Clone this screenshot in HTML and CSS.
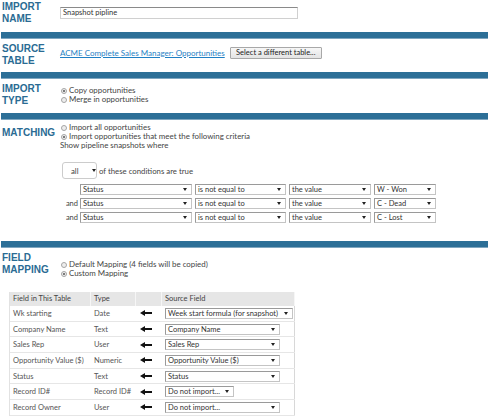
FILE: index.html
```html
<!DOCTYPE html>
<html lang="en">

<head>
    <meta charset="UTF-8">
    <title>Import snapshot</title>
    <link rel="stylesheet" href="styles.css">
</head>

<body>
    <div class="section s-name">
        <div class="label">IMPORT<br>NAME</div>
        <div class="content">
            <div class="text-input">Snapshot pipline</div>
        </div>
    </div>
    <div class="bar"></div>

    <div class="section s-source">
        <div class="label">SOURCE<br>TABLE</div>
        <div class="content source-line">
            <a href="#" class="link">ACME Complete Sales Manager: Opportunities</a>
            <span class="button">Select a different table...</span>
        </div>
    </div>
    <div class="bar"></div>

    <div class="section s-type">
        <div class="label">IMPORT<br>TYPE</div>
        <div class="content">
            <div class="radio-line"><span class="radio checked"></span>Copy opportunities</div>
            <div class="radio-line"><span class="radio"></span>Merge in opportunities</div>
        </div>
    </div>
    <div class="bar"></div>

    <div class="section s-match">
        <div class="label">MATCHING</div>
        <div class="content">
            <div class="radio-line"><span class="radio"></span>Import all opportunities</div>
            <div class="radio-line"><span class="radio checked"></span>Import opportunities that meet the following criteria</div>
            <div class="plain-line">Show pipeline snapshots where</div>

            <div class="all-line">
                <div class="all-select">all <span class="arrow"></span></div>
                <span>of these conditions are true</span>
            </div>

            <div class="cond">
                <span class="and"></span>
                <div class="sel w-field">Status<span class="arrow"></span></div>
                <div class="sel w-op">is not equal to<span class="arrow"></span></div>
                <div class="sel w-kind">the value<span class="arrow"></span></div>
                <div class="sel w-val">W - Won<span class="arrow"></span></div>
            </div>
            <div class="cond">
                <span class="and">and</span>
                <div class="sel w-field">Status<span class="arrow"></span></div>
                <div class="sel w-op">is not equal to<span class="arrow"></span></div>
                <div class="sel w-kind">the value<span class="arrow"></span></div>
                <div class="sel w-val">C - Dead<span class="arrow"></span></div>
            </div>
            <div class="cond">
                <span class="and">and</span>
                <div class="sel w-field">Status<span class="arrow"></span></div>
                <div class="sel w-op">is not equal to<span class="arrow"></span></div>
                <div class="sel w-kind">the value<span class="arrow"></span></div>
                <div class="sel w-val">C - Lost<span class="arrow"></span></div>
            </div>
        </div>
    </div>
    <div class="bar"></div>

    <div class="section s-map">
        <div class="label">FIELD<br>MAPPING</div>
        <div class="content">
            <div class="radio-line"><span class="radio"></span>Default Mapping (4 fields will be copied)</div>
            <div class="radio-line"><span class="radio checked"></span>Custom Mapping</div>
        </div>
    </div>

    <div class="map-table">
        <div class="th">Field in This Table</div>
        <div class="th">Type</div>
        <div class="th"></div>
        <div class="th">Source Field</div>

        <div class="td">Wk starting</div>
        <div class="td">Date</div>
        <div class="td"><svg class="left-arrow" viewBox="0 0 12 6"><path d="M0 3 L5 0 L5 2 L12 2 L12 4 L5 4 L5 6 Z"/></svg></div>
        <div class="td"><div class="sel w-src-long">Week start formula (for snapshot)<span class="arrow"></span></div></div>

        <div class="td">Company Name</div>
        <div class="td">Text</div>
        <div class="td"><svg class="left-arrow" viewBox="0 0 12 6"><path d="M0 3 L5 0 L5 2 L12 2 L12 4 L5 4 L5 6 Z"/></svg></div>
        <div class="td"><div class="sel w-src">Company Name<span class="arrow"></span></div></div>

        <div class="td">Sales Rep</div>
        <div class="td">User</div>
        <div class="td"><svg class="left-arrow" viewBox="0 0 12 6"><path d="M0 3 L5 0 L5 2 L12 2 L12 4 L5 4 L5 6 Z"/></svg></div>
        <div class="td"><div class="sel w-src">Sales Rep<span class="arrow"></span></div></div>

        <div class="td">Opportunity Value ($)</div>
        <div class="td">Numeric</div>
        <div class="td"><svg class="left-arrow" viewBox="0 0 12 6"><path d="M0 3 L5 0 L5 2 L12 2 L12 4 L5 4 L5 6 Z"/></svg></div>
        <div class="td"><div class="sel w-src">Opportunity Value ($)<span class="arrow"></span></div></div>

        <div class="td">Status</div>
        <div class="td">Text</div>
        <div class="td"><svg class="left-arrow" viewBox="0 0 12 6"><path d="M0 3 L5 0 L5 2 L12 2 L12 4 L5 4 L5 6 Z"/></svg></div>
        <div class="td"><div class="sel w-src">Status<span class="arrow"></span></div></div>

        <div class="td">Record ID#</div>
        <div class="td">Record ID#</div>
        <div class="td"><svg class="left-arrow" viewBox="0 0 12 6"><path d="M0 3 L5 0 L5 2 L12 2 L12 4 L5 4 L5 6 Z"/></svg></div>
        <div class="td"><div class="sel w-src-short">Do not import...<span class="arrow"></span></div></div>

        <div class="td">Record Owner</div>
        <div class="td">User</div>
        <div class="td"><svg class="left-arrow" viewBox="0 0 12 6"><path d="M0 3 L5 0 L5 2 L12 2 L12 4 L5 4 L5 6 Z"/></svg></div>
        <div class="td"><div class="sel w-src">Do not import...<span class="arrow"></span></div></div>
    </div>
</body>

</html>
```

FILE: styles.css
```css
:root {
    --blue: #2c6f97;
    --blue-text: #2a6b93;
    --text: #444;
    --border: #c4c4c4;
}

* {
    margin: 0;
    padding: 0;
    box-sizing: border-box;
}

body {
    width: 490px;
    height: 417px;
    overflow: hidden;
    padding: 0 2px 0 1px;
    font-family: Lato, "Open Sans", sans-serif;
    font-size: 7.5px;
    color: var(--text);
    background: #fff;
}

.bar {
    height: 7px;
    background-color: var(--blue);
    border-bottom: 1px solid #7fa6bf;
}

.section {
    display: flex;
}

.label {
    width: 59px;
    flex-shrink: 0;
    padding-left: 1px;
    font-family: "Liberation Sans", Arial, sans-serif;
    font-weight: bold;
    font-size: 10px;
    line-height: 12px;
    color: var(--blue-text);
}

.content {
    flex: 1;
}

/* section heights */
.s-name {
    height: 32px;
    padding-top: 1px;
}

.s-name .content {
    padding-top: 6px;
}

.text-input {
    width: 238px;
    height: 12px;
    border: 1px solid #d0d0d0;
    border-top-color: #8a8a8a;
    padding: 0 2px;
    font-size: 7.5px;
    line-height: 10px;
    color: #333;
}

.s-source {
    height: 33px;
    padding-top: 4px;
}

.source-line {
    display: flex;
    align-items: center;
    height: 11px;
    margin-top: 4px;
}

.link {
    color: #1f7fc4;
    font-size: 8px;
    text-decoration: underline;
    margin-right: 5px;
}

.button {
    display: inline-block;
    width: 92px;
    height: 12px;
    border: 1px solid #a8a8a8;
    border-radius: 1px;
    background: linear-gradient(#f7f7f7, #e4e4e4);
    font-size: 7.5px;
    line-height: 10px;
    text-align: center;
    color: #222;
}

.s-type {
    height: 34px;
    padding-top: 4px;
}

.s-type .content {
    padding-top: 3px;
}

.radio-line {
    display: flex;
    align-items: center;
    height: 9px;
    line-height: 9px;
    font-size: 7.9px;
    white-space: nowrap;
}

.plain-line {
    height: 9px;
    line-height: 9px;
    font-size: 7.9px;
}

.radio {
    width: 6px;
    height: 6px;
    border: 1px solid #a5a5a5;
    border-radius: 50%;
    background: #eee;
    margin: 0 2px 0 1px;
    position: relative;
}

.radio.checked::after {
    content: "";
    position: absolute;
    left: 1px;
    top: 1px;
    width: 2px;
    height: 2px;
    border-radius: 50%;
    background: #555;
}

.s-match {
    height: 121px;
    padding-top: 7px;
}

.s-match .content {
    margin-top: -4px;
}

.all-line {
    display: flex;
    align-items: center;
    gap: 2px;
    margin: 12px 0 5px 2px;
    font-size: 7.8px;
}

.all-select {
    width: 35px;
    height: 17px;
    border: 1px solid #ccc;
    border-radius: 3px;
    display: flex;
    align-items: center;
    padding-left: 8px;
    gap: 10px;
}

.cond {
    display: flex;
    gap: 3px;
    height: 11px;
    margin-bottom: 3px;
    margin-left: 2px;
}

.and {
    width: 16px;
    text-align: right;
    line-height: 11px;
    margin-right: -1px;
}

.sel {
    display: flex;
    align-items: center;
    justify-content: space-between;
    height: 11px;
    border: 1px solid var(--border);
    border-top-color: #9a9a9a;
    border-left-color: #9a9a9a;
    padding: 0 4px 0 2px;
    background: #fff;
    line-height: 9px;
    white-space: nowrap;
    overflow: hidden;
    color: #333;
}

.arrow {
    display: inline-block;
    flex-shrink: 0;
    width: 0;
    height: 0;
    border-left: 2px solid transparent;
    border-right: 2px solid transparent;
    border-top: 3px solid #222;
    margin-left: 3px;
}

.w-field { width: 112px; }
.w-op { width: 91px; }
.w-kind { width: 82px; }
.w-val { width: 62px; }

.s-map {
    height: 44px;
    padding-top: 4px;
}

.s-map .content {
    padding-top: 8px;
}

/* mapping table */
.map-table {
    display: grid;
    grid-template-columns: 81px 45px 26px 133px;
    grid-template-rows: 14px repeat(7, 15.7px);
    margin-left: 8px;
    width: 286px;
    border-left: 1px solid #e2e2e2;
    border-right: 1px solid #d8d8d8;
    color: #555;
}

.th {
    background: #e6e6e6;
    border-right: 1px solid #f6f6f6;
    padding-left: 3px;
    line-height: 14px;
    color: #444;
}

.td {
    display: flex;
    align-items: center;
    border-bottom: 1px solid #e6e6e6;
    padding-left: 3px;
    white-space: nowrap;
}

.left-arrow {
    width: 12px;
    height: 6px;
    margin-left: 1px;
    fill: #111;
}

.w-src-long { width: 128px; }
.w-src { width: 115px; }
.w-src-short { width: 69px; }
```
